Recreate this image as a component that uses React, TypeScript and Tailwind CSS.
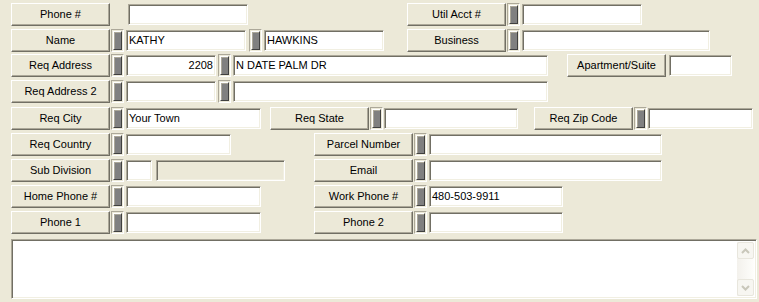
import React from "react";

const font = { fontFamily: '"Liberation Sans", Arial, sans-serif' };

function Btn({ label, w = 99 }: { label: string; w?: number }) {
  return (
    <div
      className="flex h-[23px] shrink-0 items-center justify-center border border-t-white border-l-white border-r-[#716F64] border-b-[#716F64] bg-[#ECE9D8] text-[11px] text-black shadow-[inset_-1px_-1px_#ACA899]"
      style={{ width: w }}
    >
      {label}
    </div>
  );
}

// little status tab in front of a field
function Ind() {
  return (
    <div className="flex h-[23px] w-[13px] shrink-0 items-center justify-center border border-t-[#ACA899] border-l-[#ACA899] border-b-white border-r-white">
      <div className="h-[19px] w-[9px] border border-t-white border-l-white border-r-[#404040] border-b-[#404040] bg-[#808080] shadow-[inset_1px_1px_#ACA899]" />
    </div>
  );
}

function Inp({
  w,
  value = "",
  right = false,
  disabled = false,
}: {
  w: number;
  value?: string;
  right?: boolean;
  disabled?: boolean;
}) {
  return (
    <div
      className={`h-[21px] shrink-0 overflow-hidden whitespace-nowrap border border-t-[#ACA899] border-l-[#ACA899] border-b-white border-r-white px-[2px] text-[11px] leading-[19px] text-black shadow-[inset_1px_1px_#716F64,inset_-1px_-1px_#F1EFE2] ${
        disabled ? "bg-[#ECE9D8]" : "bg-white"
      } ${right ? "text-right" : "text-left"}`}
      style={{ width: w }}
    >
      {value}
    </div>
  );
}

function Row({ mt, children }: { mt: number; children: React.ReactNode }) {
  return (
    <div className="flex h-[23px] items-center pl-[11px]" style={{ marginTop: mt }}>
      {children}
    </div>
  );
}

function Chevron({ up }: { up?: boolean }) {
  return (
    <svg width="9" height="6" viewBox="0 0 9 6">
      <path
        d={up ? "M1 5 L4.5 1.5 L8 5" : "M1 1 L4.5 4.5 L8 1"}
        fill="none"
        stroke="#C9C7BA"
        strokeWidth="2"
      />
    </svg>
  );
}

export default function App() {
  return (
    <div className="h-[302px] w-[759px] overflow-hidden bg-[#ECE9D8]" style={font}>
      <Row mt={3}>
        <Btn label="Phone #" />
        <div className="ml-[18px]"><Inp w={120} /></div>
        <div className="ml-[159px]"><Btn label="Util Acct #" /></div>
        <div className="ml-[1px]"><Ind /></div>
        <div className="ml-[2px]"><Inp w={120} /></div>
      </Row>
      <Row mt={3}>
        <Btn label="Name" />
        <div className="ml-[1px]"><Ind /></div>
        <div className="ml-[2px]"><Inp w={120} value="KATHY" /></div>
        <div className="ml-[3px]"><Ind /></div>
        <div className="ml-[2px]"><Inp w={120} value="HAWKINS" /></div>
        <div className="ml-[23px]"><Btn label="Business" /></div>
        <div className="ml-[1px]"><Ind /></div>
        <div className="ml-[2px]"><Inp w={188} /></div>
      </Row>
      <Row mt={2}>
        <Btn label="Req Address" />
        <div className="ml-[1px]"><Ind /></div>
        <div className="ml-[2px]"><Inp w={90} value="2208" right /></div>
        <div className="ml-[2px]"><Ind /></div>
        <div className="ml-[2px]"><Inp w={315} value="N DATE PALM DR" /></div>
        <div className="ml-[19px]"><Btn label="Apartment/Suite" /></div>
        <div className="ml-[3px]"><Inp w={63} /></div>
      </Row>
      <Row mt={3}>
        <Btn label="Req Address 2" />
        <div className="ml-[1px]"><Ind /></div>
        <div className="ml-[2px]"><Inp w={90} /></div>
        <div className="ml-[2px]"><Ind /></div>
        <div className="ml-[2px]"><Inp w={315} /></div>
      </Row>
      <Row mt={4}>
        <Btn label="Req City" />
        <div className="ml-[1px]"><Ind /></div>
        <div className="ml-[2px]"><Inp w={135} value="Your Town" /></div>
        <div className="ml-[9px]"><Btn label="Req State" /></div>
        <div className="ml-[1px]"><Ind /></div>
        <div className="ml-[1px]"><Inp w={134} /></div>
        <div className="ml-[16px]"><Btn label="Req Zip Code" /></div>
        <div className="ml-[1px]"><Ind /></div>
        <div className="ml-[1px]"><Inp w={105} /></div>
      </Row>
      <Row mt={3}>
        <Btn label="Req Country" />
        <div className="ml-[1px]"><Ind /></div>
        <div className="ml-[2px]"><Inp w={105} /></div>
        <div className="ml-[83px]"><Btn label="Parcel Number" /></div>
        <div className="ml-[1px]"><Ind /></div>
        <div className="ml-[2px]"><Inp w={233} /></div>
      </Row>
      <Row mt={3}>
        <Btn label="Sub Division" />
        <div className="ml-[1px]"><Ind /></div>
        <div className="ml-[2px]"><Inp w={26} /></div>
        <div className="ml-[4px]"><Inp w={129} disabled /></div>
        <div className="ml-[29px]"><Btn label="Email" /></div>
        <div className="ml-[1px]"><Ind /></div>
        <div className="ml-[2px]"><Inp w={233} /></div>
      </Row>
      <Row mt={3}>
        <Btn label="Home Phone #" />
        <div className="ml-[1px]"><Ind /></div>
        <div className="ml-[2px]"><Inp w={135} /></div>
        <div className="ml-[53px]"><Btn label="Work Phone #" /></div>
        <div className="ml-[1px]"><Ind /></div>
        <div className="ml-[2px]"><Inp w={134} value="480-503-9911" /></div>
      </Row>
      <Row mt={3}>
        <Btn label="Phone 1" />
        <div className="ml-[1px]"><Ind /></div>
        <div className="ml-[2px]"><Inp w={135} /></div>
        <div className="ml-[53px]"><Btn label="Phone 2" /></div>
        <div className="ml-[1px]"><Ind /></div>
        <div className="ml-[2px]"><Inp w={134} /></div>
      </Row>
      <div className="ml-[11px] mt-[5px] flex h-[60px] w-[746px] border border-t-[#ACA899] border-l-[#ACA899] border-b-white border-r-white bg-white shadow-[inset_1px_1px_#716F64,inset_-1px_-1px_#F1EFE2]">
        <div className="flex-1" />
        <div className="my-[2px] mr-[2px] flex w-[17px] flex-col bg-gradient-to-r from-[#F3F1EC] to-[#FEFEFB]">
          <div className="flex h-[17px] items-center justify-center rounded-[2px] border border-[#E8E6DD] bg-[#F7F6F1]">
            <Chevron up />
          </div>
          <div className="flex-1" />
          <div className="flex h-[17px] items-center justify-center rounded-[2px] border border-[#E8E6DD] bg-[#F7F6F1]">
            <Chevron />
          </div>
        </div>
      </div>
    </div>
  );
}
